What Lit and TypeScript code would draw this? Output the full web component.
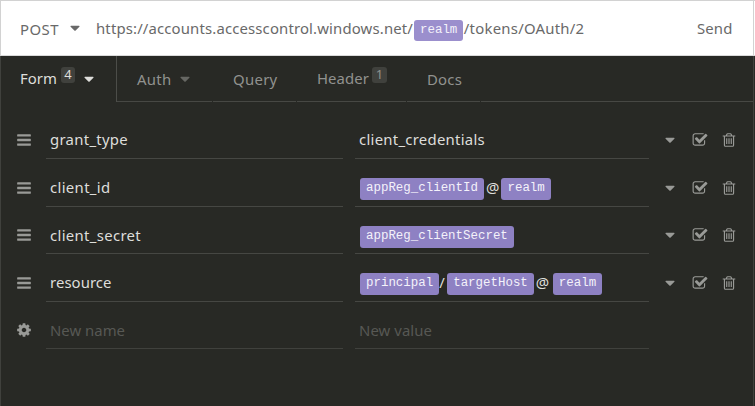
import { LitElement, html, css, svg } from "lit";
import { customElement, property } from "lit/decorators.js";
import { classMap } from "lit/directives/class-map.js";

const ICONS: Record<string, string> = {
  bars: "M1664 1344v128q0 26-19 45t-45 19h-1408q-26 0-45-19t-19-45v-128q0-26 19-45t45-19h1408q26 0 45 19t19 45zm0-512v128q0 26-19 45t-45 19h-1408q-26 0-45-19t-19-45v-128q0-26 19-45t45-19h1408q26 0 45 19t19 45zm0-512v128q0 26-19 45t-45 19h-1408q-26 0-45-19t-19-45v-128q0-26 19-45t45-19h1408q26 0 45 19t19 45z",
  caret: "M1408 704q0 26-19 45l-448 448q-19 19-45 19t-45-19l-448-448q-19-19-19-45t19-45 45-19h896q26 0 45 19t19 45z",
  check: "M1472 930v318q0 119-84.5 203.5t-203.5 84.5h-832q-119 0-203.5-84.5t-84.5-203.5v-832q0-119 84.5-203.5t203.5-84.5h832q63 0 117 25 15 7 18 23 3 17-9 29l-49 49q-10 10-23 10-3 0-9-2-23-6-45-6h-832q-66 0-113 47t-47 113v832q0 66 47 113t113 47h832q66 0 113-47t47-113v-254q0-13 9-22l64-64q10-10 23-10 6 0 12 3 20 8 20 29zm231-489l-814 814q-24 24-57 24t-57-24l-430-430q-24-24-24-57t24-57l110-110q24-24 57-24t57 24l263 263 647-647q24-24 57-24t57 24l110 110q24 24 24 57t-24 57z",
  trash: "M704 736v576q0 14-9 23t-23 9h-64q-14 0-23-9t-9-23v-576q0-14 9-23t23-9h64q14 0 23 9t9 23zm256 0v576q0 14-9 23t-23 9h-64q-14 0-23-9t-9-23v-576q0-14 9-23t23-9h64q14 0 23 9t9 23zm256 0v576q0 14-9 23t-23 9h-64q-14 0-23-9t-9-23v-576q0-14 9-23t23-9h64q14 0 23 9t9 23zm128 724v-948h-896v948q0 22 7 40.5t14.5 27 10.5 8.5h832q3 0 10.5-8.5t14.5-27 7-40.5zm-672-1076h448l-48-117q-7-9-17-11h-317q-10 2-17 11zm928 32v64q0 14-9 23t-23 9h-96v948q0 83-47 143.5t-113 60.5h-832q-66 0-113-58.5t-47-141.5v-952h-96q-14 0-23-9t-9-23v-64q0-14 9-23t23-9h309l70-167q15-37 54-63t79-26h320q40 0 79 26t54 63l70 167h309q14 0 23 9t9 23z",
  cog: "M1152 896q0-106-75-181t-181-75-181 75-75 181 75 181 181 75 181-75 75-181zm512-109v222q0 12-8 23t-20 13l-185 28q-19 54-39 91 35 50 107 138 10 12 10 25t-9 23q-27 37-99 108t-94 71q-12 0-26-9l-138-108q-44 23-91 38-16 136-29 186-7 28-36 28h-222q-14 0-24.5-8.5t-11.5-21.5l-28-184q-49-16-90-37l-141 107q-10 9-25 9-14 0-25-11-126-114-165-168-7-10-7-23 0-12 8-23 15-21 51-66.5t54-70.5q-27-50-41-99l-183-27q-13-2-21-12.5t-8-23.5v-222q0-12 8-23t19-13l186-28q14-46 39-92-40-57-107-138-10-12-10-24 0-10 9-23 26-36 98.5-107.5t94.5-71.5q13 0 26 10l138 107q44-23 91-38 16-136 29-186 7-28 36-28h222q14 0 24.5 8.5t11.5 21.5l28 184q49 16 90 37l142-107q9-9 24-9 13 0 25 10 129 119 165 170 7 8 7 22 0 12-8 23-15 21-51 66.5t-54 70.5q26 50 41 98l183 28q13 2 21 12.5t8 23.5z",
};

@customElement("ui-icon")
class UiIcon extends LitElement {
  static styles = css`
    :host { display: block; width: 16px; height: 16px; flex: none; }
    .glyph { display: block; width: 16px; height: 16px; fill: currentColor; }
  `;
  @property() name = "caret";
  render() {
    return html`<svg class="glyph" viewBox="0 0 1792 1792">${svg`<path d=${ICONS[this.name]}></path>`}</svg>`;
  }
}

/* A one-line label whose tracking is set so that it fills the given measure. */
@customElement("fit-label")
class FitLabel extends LitElement {
  static styles = css`
    :host { display: block; flex: none; white-space: pre; }
    .text { display: inline-block; }
  `;
  @property() text = "";
  @property({ type: Number }) measure = 0;
  render() {
    return html`<span class="text">${this.text}</span>`;
  }
  updated() {
    const el = this.renderRoot.querySelector(".text") as HTMLElement;
    el.style.letterSpacing = "0px";
    const natural = el.getBoundingClientRect().width;
    el.style.letterSpacing = `${(this.measure - natural) / this.text.length}px`;
  }
}

type Part = { tag?: string; text?: string; w?: number };
type Row = { name: string; w: number; value: Part[]; blank?: boolean };

const ROWS: Row[] = [
  { name: "grant_type", w: 78, value: [{ text: "client_credentials", w: 126 }] },
  { name: "client_id", w: 60.5, value: [{ tag: "appReg_clientId" }, { text: "@", w: 16.5 }, { tag: "realm" }] },
  { name: "client_secret", w: 91, value: [{ tag: "appReg_clientSecret" }] },
  { name: "resource", w: 61.5, value: [{ tag: "principal" }, { text: "/", w: 8 }, { tag: "targetHost" }, { text: "@", w: 18 }, { tag: "realm" }] },
  { name: "New name", w: 75, value: [{ text: "New value", w: 73 }], blank: true },
];

const TABS = [
  { label: "Form", w: 37, count: "4", caret: true, active: true, size: "form" },
  { label: "Auth", w: 34.5, caret: true, size: "auth" },
  { label: "Query", w: 44.5, size: "query" },
  { label: "Header", w: 52, count: "1", size: "header" },
  { label: "Docs", w: 35, size: "docs" },
];

@customElement("app-root")
class AppRoot extends LitElement {
  static styles = css`
    :host {
      display: flex; flex-direction: column; box-sizing: border-box;
      width: 755px; height: 406px; overflow: hidden;
      background: #282925; color: #dededb;
      font: 14.9px/20px "Noto Sans", "Open Sans", sans-serif;
    }
    .url {
      box-sizing: border-box; height: 56px; flex: none; display: flex; align-items: center;
      background: #fff; color: #696969; border: 1px solid #d2d2d2; border-right: 0;
      border-bottom-color: #dadada; padding-left: 19px;
    }
    .url .method { padding-top: 1px; }
    .url .drop { margin: 0 13px 0 8px; }
    .url .tag { margin: 5px 0.5px 0 1px; background: #9b8fcd; color: #f4f2fa; }
    .url .send { margin-left: auto; padding-right: 20.5px; }
    .edge { width: 1px; align-self: stretch; background: #d2d2d2; margin-right: 1px; }
    .pane { flex: 1; box-sizing: border-box; margin-right: 1px; border: solid #40413d; border-width: 0 1px; }
    .tabs { display: flex; height: 46px; }
    .tab {
      box-sizing: border-box; display: flex; align-items: center; height: 46px;
      padding: 0 0 0 20px; color: #91928f; position: relative;
    }
    .tab::after {
      content: ""; position: absolute; left: 0; right: 1px; bottom: 0; height: 1px; background: #474844;
    }
    .tab.active { color: #dededb; border-right: 1px solid #4c4d49; padding: 0 0 2px 19px; }
    .tab.active::after { display: none; }
    .form { width: 116px; }
    .auth { width: 96px; }
    .query { width: 84px; }
    .header { width: 110px; padding-bottom: 2px; }
    .docs { width: 74px; }
    .rest { flex: 1; border-bottom: 1px solid #474844; }
    .count {
      box-sizing: border-box; width: 14px; height: 16px; border-radius: 3px;
      margin: -6px 0 0 4px; background: #40413d; font-size: 13px; line-height: 15px; text-align: center;
    }
    .header .count { width: 15px; margin: -6px 0 0 3px; }
    .form .drop { margin: 1px 0 0 5.5px; }
    .auth .drop { margin: 0 0 0 5px; color: #666763; }
    .rows { padding-top: 9.5px; }
    .row { display: flex; height: 47.5px; color: #dededb; }
    .icon { color: #999a97; margin-top: 20.5px; }
    .lead { margin-left: 15px; }
    .field {
      box-sizing: border-box; height: 47.5px; border-bottom: 1px solid #464743;
      display: flex; align-items: flex-start; padding: 17.5px 0 0 4px;
    }
    .row:nth-child(3) .name, .blank .field { padding-top: 18.5px; }
    .name { width: 297px; margin-left: 14px; }
    .value { width: 294px; margin-left: 12px; }
    .value.tagged { padding-left: 5px; }
    .blank .field { color: #575854; border-bottom-color: #40413d; }
    .tag {
      box-sizing: border-box; height: 22px; flex: none; padding: 0 6px; border-radius: 3px;
      background: #8e81c3; color: #f4f2fa; font: 12.45px/21px "Liberation Mono", monospace;
    }
    .url .tag { height: 21px; line-height: 20px; }
    .field .tag { margin-top: 1.5px; }
    .at { box-sizing: border-box; text-indent: 1px; }
    .down { margin-left: 13px; }
    .tick { margin-left: 13.5px; }
    .bin { margin-left: 13.5px; }
  `;

  private part(p: Part) {
    return p.tag
      ? html`<span class="tag">${p.tag}</span>`
      : html`<fit-label class=${classMap({ at: p.text === "@" })} text=${p.text!} measure=${p.w!}></fit-label>`;
  }

  render() {
    return html`
      <div class="url">
        <fit-label class="method" text="POST" measure="39"></fit-label>
        <ui-icon class="drop"></ui-icon>
        <fit-label text="https://accounts.accesscontrol.windows.net/" measure="317"></fit-label>
        <span class="tag">realm</span>
        <fit-label text="/tokens/OAuth/2" measure="120.5"></fit-label>
        <fit-label class="send" text="Send" measure="35.5"></fit-label>
        <span class="edge"></span>
      </div>
      <div class="pane">
        <div class="tabs">
          ${TABS.map(
            (t) => html`<div class=${classMap({ tab: true, active: !!t.active, [t.size]: true })}>
              <fit-label text=${t.label} measure=${t.w}></fit-label>
              ${t.count ? html`<span class="count">${t.count}</span>` : ""}
              ${t.caret ? html`<ui-icon class="drop"></ui-icon>` : ""}
            </div>`
          )}
          <div class="rest"></div>
        </div>
        <div class="rows">
          ${ROWS.map(
            (r) => html`<div class=${classMap({ row: true, blank: !!r.blank })}>
              <ui-icon class="icon lead" name=${r.blank ? "cog" : "bars"}></ui-icon>
              <div class="field name"><fit-label text=${r.name} measure=${r.w}></fit-label></div>
              <div class=${classMap({ field: true, value: true, tagged: !!r.value[0].tag })}>${r.value.map((p) => this.part(p))}</div>
              ${r.blank
                ? ""
                : html`<ui-icon class="icon down"></ui-icon>
                    <ui-icon class="icon tick" name="check"></ui-icon>
                    <ui-icon class="icon bin" name="trash"></ui-icon>`}
            </div>`
          )}
        </div>
      </div>
    `;
  }
}
